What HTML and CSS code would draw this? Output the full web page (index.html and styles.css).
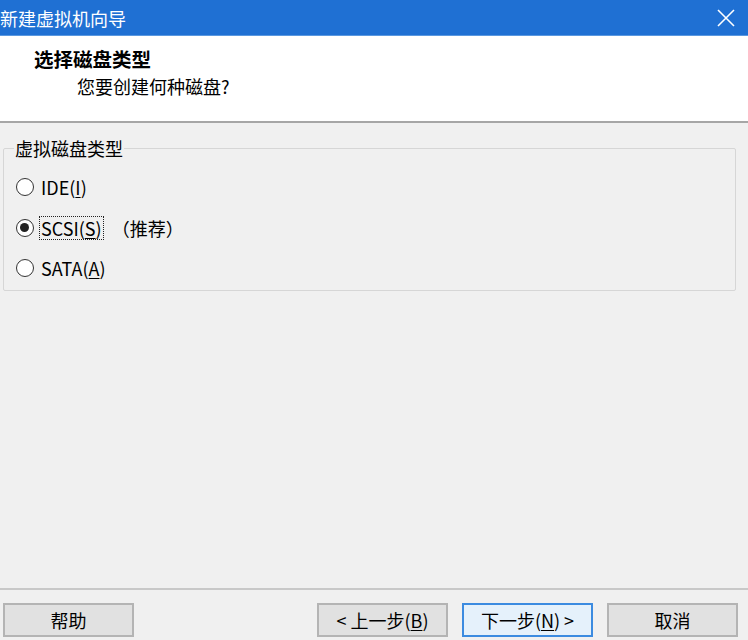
FILE: index.html
```html
<!DOCTYPE html>
<html lang="zh">
<head>
<meta charset="utf-8">
<link rel="stylesheet" href="styles.css">
</head>
<body>
<div class="window">
  <div class="titlebar">
    <span class="title">新建虚拟机向导</span>
    <svg class="close" width="18" height="18" viewBox="0 0 18 18"><path d="M1 1 L17 17 M17 1 L1 17" stroke="#fff" stroke-width="1.6" fill="none"/></svg>
  </div>
  <div class="header">
    <div class="h-title">选择磁盘类型</div>
    <div class="h-sub">您要创建何种磁盘?</div>
  </div>
  <div class="content">
    <fieldset class="group">
      <legend>虚拟磁盘类型</legend>
      <div class="radio-row"><span class="radio"></span><span class="label">IDE(<u>I</u>)</span></div>
      <div class="radio-row"><span class="radio checked"></span><span class="label focus">SCSI(<u>S</u>)</span><span class="note">（推荐）</span></div>
      <div class="radio-row"><span class="radio"></span><span class="label">SATA(<u>A</u>)</span></div>
    </fieldset>
  </div>
  <div class="footer">
    <button class="btn">帮助</button>
    <div class="spacer"></div>
    <button class="btn">&lt; 上一步(<u>B</u>)</button>
    <button class="btn primary">下一步(<u>N</u>) &gt;</button>
    <button class="btn">取消</button>
  </div>
</div>
</body>
</html>
```
FILE: styles.css
```css
* { box-sizing: border-box; }
html, body { margin: 0; padding: 0; }
body {
  width: 748px; height: 640px; overflow: hidden;
  background: #f0f0f0;
  font-family: "Noto Sans CJK SC", "Noto Sans", sans-serif;
  color: #000;
}
.window { width: 748px; height: 640px; display: flex; flex-direction: column; }
.titlebar {
  height: 36px; background: #1f70d3; border-bottom: 1px solid #5a98e0;
  display: flex; align-items: center; justify-content: space-between;
  padding: 0 13px 0 0; color: #fff;
}
.title { font-size: 18px; margin-left: 0; line-height: 1; }
.close { display: block; }
.header {
  height: 87px; background: #fff; border-bottom: 2px solid #a6a6a6;
  display: flex; flex-direction: column;
}
.h-title { font-size: 19.5px; font-weight: bold; margin: 10px 0 0 34px; line-height: 26px; }
.h-sub { font-size: 18px; margin: 2px 0 0 77px; line-height: 24px; }
.content { flex: 1; padding: 15px 12px 0 3px; }
.group {
  margin: 0; padding: 9px 0 6px 12px;
  border: 1px solid #d6d6d6; border-radius: 2px;
  height: 153px;
}
.group legend { font-size: 18px; padding: 0 1px; margin-left: -2px; line-height: 20px; }
.radio-row { display: flex; align-items: center; height: 40.5px; }
.radio {
  width: 18px; height: 18px; border: 1.5px solid #333; border-radius: 50%;
  background: #fff; margin-right: 5px; position: relative; flex: none;
}
.radio.checked::after {
  content: ""; position: absolute; left: 3px; top: 3px; width: 9px; height: 9px;
  border-radius: 50%; background: #222;
}
.label { font-size: 18px; line-height: 22px; padding: 0 1px; border: 1px solid transparent; }
.label.focus { border: 1px dotted #222; }
.note { font-size: 18px; margin-left: 8px; }
.footer {
  height: 52px; border-top: 2px solid #c8c8c8;
  display: flex; align-items: flex-start; padding: 13px 10px 0 3px; gap: 14px;
}
.spacer { flex: 1; }
.btn {
  width: 131px; height: 34px; font-family: inherit; font-size: 18px;
  background: #e1e1e1; border: 2px solid #b4b4b4; padding: 0; color: #000;
}
.btn.primary { background: #e5f1fb; border-color: #3c8be0; }
u { text-decoration: underline; text-underline-offset: 2px; }
```
